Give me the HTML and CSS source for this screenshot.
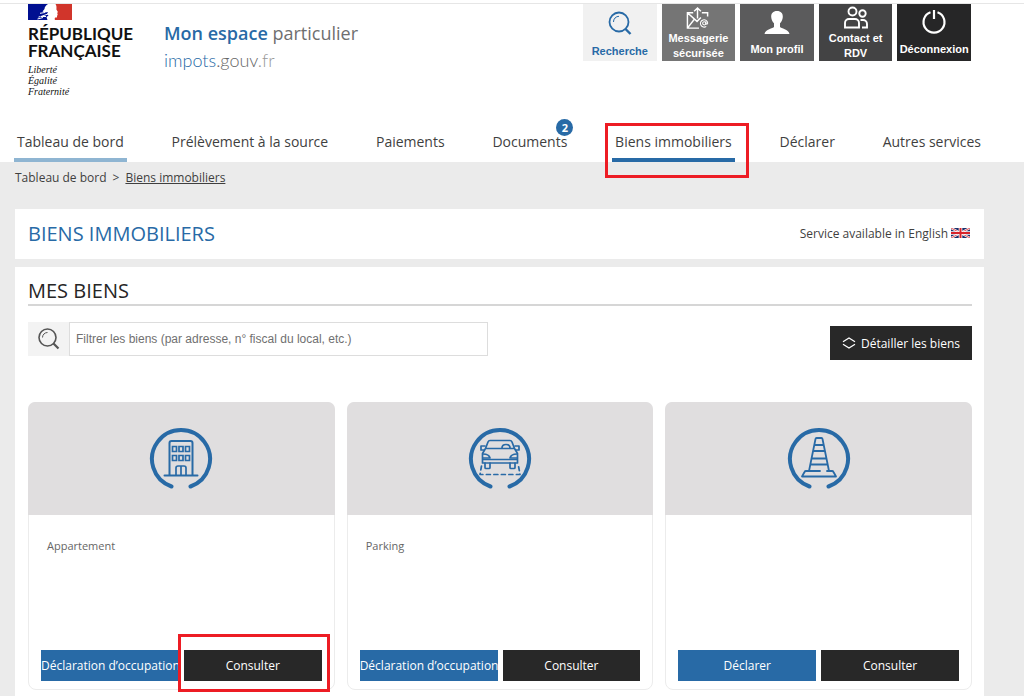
FILE: index.html
```html
<!DOCTYPE html>
<html lang="fr">
<head>
<meta charset="utf-8">
<meta name="viewport" content="width=device-width, initial-scale=1">
<title>Biens immobiliers</title>
<link rel="stylesheet" href="styles.css">
</head>
<body>
<header class="header">
  <div class="masthead">
    <div class="state">
      <svg class="state-flag" width="45" height="17" viewBox="0 0 45 17" aria-hidden="true">
        <path fill="#fff" d="M0 0h45v17H0z"/>
        <path fill="#000f91" d="M0 0h20c-2 1-3.500 3-3.500 5l-2 2.500 2.500 1 3-.5-1 2 1.500 1.500-2 1.500 1 3H0z"/>
        <path stroke="#fff" stroke-width="1" fill="none" d="M17 8.500l-5 .8M20 10l-7 2.500h5M15 13.500L9.500 15M12.500 12.500l-2 .6"/>
        <path fill="#d1352b" d="M27.500 0H44v16H27c-.5-1-.4-2 .3-2.600h1.600l.3-1.800.5-1-.5-1.600.7-1-1.500-2.500C28.600 3.500 28.600 1.500 27.500 0z"/>
      </svg>
      <div class="state-name">RÉPUBLIQUE<br>FRANÇAISE</div>
      <div class="state-motto">Liberté<br>Égalité<br>Fraternité</div>
    </div>
    <div class="brand">
      <div class="brand-title"><strong>Mon espace</strong> particulier</div>
      <div class="brand-site"><span class="site-a">impots</span><span class="site-b">.gouv</span><span class="site-c">.fr</span></div>
    </div>
    <div class="tiles">
      <a class="tile tile-search" href="#">
        <svg width="28" height="28" viewBox="0 0 28 28" fill="none" stroke="currentColor" aria-hidden="true"><circle cx="13" cy="13" r="9.500" stroke-width="1.800"/><path d="M7.500 13A5.500 5.500 0 0 1 13 7.300" stroke-width="1"/><path d="M19.500 20l5 5" stroke-width="2.400"/></svg>
        <span>Recherche</span>
      </a>
      <a class="tile tile-mail" href="#">
        <svg width="28" height="26" viewBox="0 0 28 26" fill="none" stroke="currentColor" stroke-width="1.500" aria-hidden="true"><path d="M9 7H3v16h12M18 7h6v4M3 7l10 9 4-4M3 23l7-9M13.500 13V2M10 5.500L13.500 2 17 5.500"/><circle cx="20.500" cy="18" r="1.700" stroke-width="1.100"/><path d="M22.200 16v2.500q1.700 1 1.900-.8a3.800 3.800 0 1 0-1.500 3.500" stroke-width="1.100"/></svg>
        <span>Messagerie sécurisée</span>
      </a>
      <a class="tile tile-profile" href="#">
        <svg width="28" height="26" viewBox="0 0 28 26" fill="currentColor" aria-hidden="true"><path d="M14 2c4 0 6 2.500 5.800 6-.2 3-1.500 5-2.800 6.200V18c1 1.600 8.500 2 9.500 7h-25c1-5 8.500-5.400 9.500-7v-3.800C9.700 13 8.400 11 8.200 8 8 4.500 10 2 14 2z"/></svg>
        <span>Mon profil</span>
      </a>
      <a class="tile tile-contact" href="#">
        <svg width="28" height="26" viewBox="0 0 28 26" fill="none" stroke="currentColor" stroke-width="1.900" aria-hidden="true"><circle cx="10.500" cy="7.500" r="4"/><circle cx="20.500" cy="9.500" r="3.200"/><path d="M3 23.500V19a4 4 0 0 1 4-4h6a4 4 0 0 1 4 4v4.500zM18.500 16h2.500a4 4 0 0 1 4 4v3.500h-5"/></svg>
        <span>Contact et RDV</span>
      </a>
      <a class="tile tile-logout" href="#">
        <svg width="28" height="28" viewBox="0 0 28 28" fill="none" stroke="currentColor" stroke-width="2.200" aria-hidden="true"><path d="M10.500 3.200a10.500 10.500 0 1 0 7 0M14 1v9"/></svg>
        <span>Déconnexion</span>
      </a>
    </div>
  </div>
  <nav class="nav" aria-label="Navigation principale">
    <a class="nav-item is-home" href="#">Tableau de bord</a>
    <a class="nav-item" href="#">Prélèvement à la source</a>
    <a class="nav-item" href="#">Paiements</a>
    <a class="nav-item" href="#">Documents<span class="badge">2</span></a>
    <a class="nav-item is-current" href="#" aria-current="page">Biens immobiliers<span class="mark mark-nav"></span></a>
    <a class="nav-item" href="#">Déclarer</a>
    <a class="nav-item" href="#">Autres services</a>
  </nav>
</header>

<nav class="crumbs" aria-label="Fil d'Ariane">
  <a href="#">Tableau de bord</a><span>&gt;</span><a class="crumb-current" href="#">Biens immobiliers</a>
</nav>

<main class="main">
  <section class="panel title-panel">
    <h1>BIENS IMMOBILIERS</h1>
    <a class="lang" href="#">Service available in English
      <svg width="19" height="10" viewBox="0 0 19 10" aria-hidden="true"><path fill="#1b2f6b" d="M0 0h19v10H0z"/><path stroke="#fff" stroke-width="2.200" d="M0 0l19 10M19 0L0 10"/><path stroke="#d8232a" stroke-width=".8" d="M0 0l19 10M19 0L0 10"/><path stroke="#fff" stroke-width="3.600" d="M9.500 0v10M0 5h19"/><path stroke="#d8232a" stroke-width="2" d="M9.500 0v10M0 5h19"/></svg>
    </a>
  </section>

  <section class="panel goods">
    <h2>MES BIENS</h2>
    <div class="toolbar">
      <div class="filter">
        <label class="filter-icon" for="filter" aria-label="Filtrer les biens">
          <svg width="24" height="24" viewBox="0 0 24 24" fill="none" stroke="#555" aria-hidden="true"><circle cx="10.500" cy="10.500" r="8.500" stroke-width="1.600"/><path d="M5.500 10.500a5 5 0 0 1 5-5" stroke-width="1"/><path d="M16.500 16.500l5 5" stroke-width="2.200"/></svg>
        </label>
        <input id="filter" type="text" placeholder="Filtrer les biens (par adresse, n° fiscal du local, etc.)">
      </div>
      <button class="btn btn-dark btn-detail" type="button">
        <svg width="14" height="12" viewBox="0 0 14 12" fill="none" stroke="currentColor" stroke-width="1.300" aria-hidden="true"><path d="M1 4.700L7 1l6 3.700M1 7.300L7 11l6-3.700"/></svg>
        Détailler les biens
      </button>
    </div>

    <div class="cards">
      <article class="card">
        <div class="card-head">
          <svg width="64" height="64" viewBox="0 0 64 64" fill="none" stroke="#286aa6" stroke-linecap="round" aria-hidden="true">
            <path d="M22.500 58.500a29 29 0 1 1 19 0" stroke-width="4"/>
            <path d="M20.500 47V15q0-2 2-2h19q2 0 2 2v32" stroke-width="2"/><path d="M15.500 47.500h33" stroke-width="2"/>
            <path d="M23.500 18.500h4v5h-4zM30 18.500h4v5h-4zM36.500 18.500h4v5h-4zM23.500 27.500h4v5h-4zM30 27.500h4v5h-4zM36.500 27.500h4v5h-4z" stroke-width="1.700"/>
            <path d="M27 47v-7q0-2 2-2h6q2 0 2 2v7M32 38v9" stroke-width="1.700"/>
          </svg>
        </div>
        <div class="card-body">Appartement</div>
        <div class="card-actions">
          <button class="btn btn-blue" type="button">Déclaration d’occupation</button>
          <button class="btn btn-dark marked" type="button">Consulter<span class="mark mark-button"></span></button>
        </div>
      </article>
      <article class="card">
        <div class="card-head">
          <svg width="64" height="64" viewBox="0 0 64 64" fill="none" stroke="#286aa6" stroke-linecap="round" stroke-linejoin="round" aria-hidden="true">
            <path d="M22.500 58.500a29 29 0 1 1 19 0" stroke-width="4"/>
            <g stroke-width="1.700"><path d="M17.500 20.500l2.500-6.500q.6-1.500 2-1.500h20q1.400 0 2 1.500l2.500 6.500M17.500 20.500h29l3 5V35h-35v-9.500zM14.500 31.500h35"/><path d="M17 18h-4v4h3M47 18h4v4h-3M15 26q6 0 7 4h-7M49 26q-6 0-7 4h7M34 20q0-3.500 4-3.500t4 3.500"/><path d="M17 35v4.500q0 1 1 1h3q1 0 1-1V35M42 35v4.500q0 1 1 1h3q1 0 1-1V35"/><path d="M13.500 38L12 46.500h40L50.500 38" stroke-dasharray="4 3.500"/></g>
          </svg>
        </div>
        <div class="card-body">Parking</div>
        <div class="card-actions">
          <button class="btn btn-blue" type="button">Déclaration d’occupation</button>
          <button class="btn btn-dark" type="button">Consulter</button>
        </div>
      </article>
      <article class="card">
        <div class="card-head">
          <svg width="64" height="64" viewBox="0 0 64 64" fill="none" stroke="#286aa6" stroke-linecap="round" stroke-linejoin="round" aria-hidden="true">
            <path d="M22.500 58.500a29 29 0 1 1 19 0" stroke-width="4"/>
            <g stroke-width="1.800"><path d="M22 43l6.500-32q.2-1 1-1h5q.8 0 1 1L42 43M27.500 17h9M26.200 23h11.600M25 30.500h14M23.500 36.500h17"/><path d="M33 43H19q-1 0-1.500 1L15 48.500h34L46.500 44q-.5-1-1.500-1h-5"/></g>
          </svg>
        </div>
        <div class="card-body"></div>
        <div class="card-actions">
          <button class="btn btn-blue" type="button">Déclarer</button>
          <button class="btn btn-dark" type="button">Consulter</button>
        </div>
      </article>
    </div>
  </section>
</main>
</body>
</html>
```

FILE: styles.css
```css
* { box-sizing: border-box; }
body {
  margin: 0;
  padding-top: 3px;
  background: #ebebeb;
  background-image: linear-gradient(#fff, #fff);
  background-size: 100% 3px;
  background-repeat: no-repeat;
  color: #3f3f3f;
  font-family: "Open Sans", "Noto Sans", sans-serif;
  font-size: 12px;
}
a { color: inherit; text-decoration: none; }
h1, h2 { margin: 0; font-size: 20px; font-weight: 400; }

.header { background: #fff; border-top: 1px solid #e6e6e6; }
.masthead {
  display: flex;
  align-items: flex-start;
  padding: 0 53px 0 28px;
  height: 120px;
}
.state { width: 136px; color: #111; }
.state-flag { display: block; }
.state-name {
  margin-top: 4px;
  font: 700 17px/17px Lato, sans-serif;
}
.state-motto {
  margin-top: 5px;
  font: italic 10px/11px "Liberation Serif", serif;
}
.brand { flex: 1; padding-top: 16px; }
.brand-title { color: #6f6f6f; font-size: 18px; line-height: 26px; }
.brand-title strong { color: #286aa6; font-weight: 600; }
.brand-site { margin-top: 2px; font: 300 18px/24px Lato, sans-serif; }
.site-a { color: #286aa6; }
.site-b { color: #666; }
.site-c { color: #999; }

.tiles {
  display: grid;
  grid-template-columns: repeat(5, 1fr);
  gap: 5px;
  width: 388px;
}
.tile {
  display: flex;
  flex-direction: column;
  align-items: center;
  justify-content: space-between;
  height: 57px;
  padding: 5px 0 4px;
  color: #fff;
  font: 700 11px/15px "Liberation Sans", Arial, sans-serif;
  text-align: center;
}
.tile-search { background: #f1f1f1; color: #286aa6; padding-bottom: 2px; }
.tile-mail { background: #757575; padding: 2px 2px 0; }
.tile-profile { background: #5b5b5c; }
.tile-contact { background: #434344; padding: 0 8px; }
.tile-logout { background: #262627; }

.nav {
  display: flex;
  justify-content: space-between;
  padding: 0 40px 0 14px;
}
.nav-item {
  position: relative;
  padding: 8px 3px 6px;
  border-bottom: 4px solid transparent;
  font-size: 14px;
  line-height: 20px;
  white-space: nowrap;
}
.is-home { border-color: #8fb5d2; }
.is-current { border-color: #286aa6; }
.badge {
  position: absolute;
  top: -5px;
  right: -3px;
  width: 17px;
  height: 17px;
  border-radius: 50%;
  background: #286aa6;
  color: #fff;
  font-size: 11px;
  font-weight: 700;
  line-height: 17px;
  text-align: center;
}
.mark { position: absolute; border: 3px solid #ed1c24; pointer-events: none; }
.mark-nav { inset: -1px -14px -20px -7px; }
.mark-button { inset: -16px -8px -11px -6px; }

.crumbs {
  display: flex;
  gap: 6px;
  padding: 7px 15px 23px;
  line-height: 17px;
}
.crumb-current { text-decoration: underline; }

.main { padding: 0 40px 0 15px; }
.panel { background: #fff; padding: 10px 12px 10px 13px; }
.title-panel {
  display: flex;
  align-items: center;
  justify-content: space-between;
  height: 50px;
  margin-bottom: 8px;
  padding: 8px 12px 10px 13px;
}
.title-panel h1 { color: #286aa6; }
.lang { display: flex; align-items: center; gap: 3px; padding-right: 2px; }
.goods { padding-bottom: 6px; }
.goods h2 {
  color: #262626;
  border-bottom: 2px solid #d6d6d6;
  line-height: 27px;
}
.toolbar {
  display: flex;
  align-items: flex-start;
  justify-content: space-between;
  padding-top: 16px;
}
.filter { display: flex; width: 460px; height: 34px; }
.filter-icon {
  display: flex;
  align-items: center;
  justify-content: center;
  width: 41px;
  background: #f3f3f3;
}
.filter input {
  flex: 1;
  border: 1px solid #ddd;
  padding: 0 6px;
  font: 12px "Liberation Sans", Arial, sans-serif;
}
.filter input::placeholder { color: #707070; }
.btn {
  flex: 1 1 0;
  min-width: 0;
  height: 31px;
  padding: 0;
  border: 0;
  color: #fff;
  font: 12px "Open Sans", "Noto Sans", sans-serif;
  white-space: nowrap;
}
.btn-dark { background: #282828; }
.btn-blue { background: #286aa6; }
.btn-detail {
  display: flex;
  flex: none;
  align-items: center;
  gap: 5px;
  height: 34px;
  margin-top: 4px;
  padding: 0 12px;
}
.cards {
  display: grid;
  grid-template-columns: repeat(3, 1fr);
  gap: 12px;
  margin-top: 42px;
}
.card {
  border: 1px solid #ececec;
  border-radius: 8px;
}
.card-head {
  display: flex;
  align-items: center;
  justify-content: center;
  height: 113px;
  margin: -1px -1px 0;
  padding-top: 2px;
  border-radius: 7px 7px 0 0;
  background: #e0dedf;
}
.card-body {
  min-height: 135px;
  padding: 22px 18px;
  color: #666;
  font-size: 11px;
  line-height: 17px;
}
.card-actions { display: flex; gap: 5px; padding: 0 12px 8px; }
.marked { position: relative; }
```
